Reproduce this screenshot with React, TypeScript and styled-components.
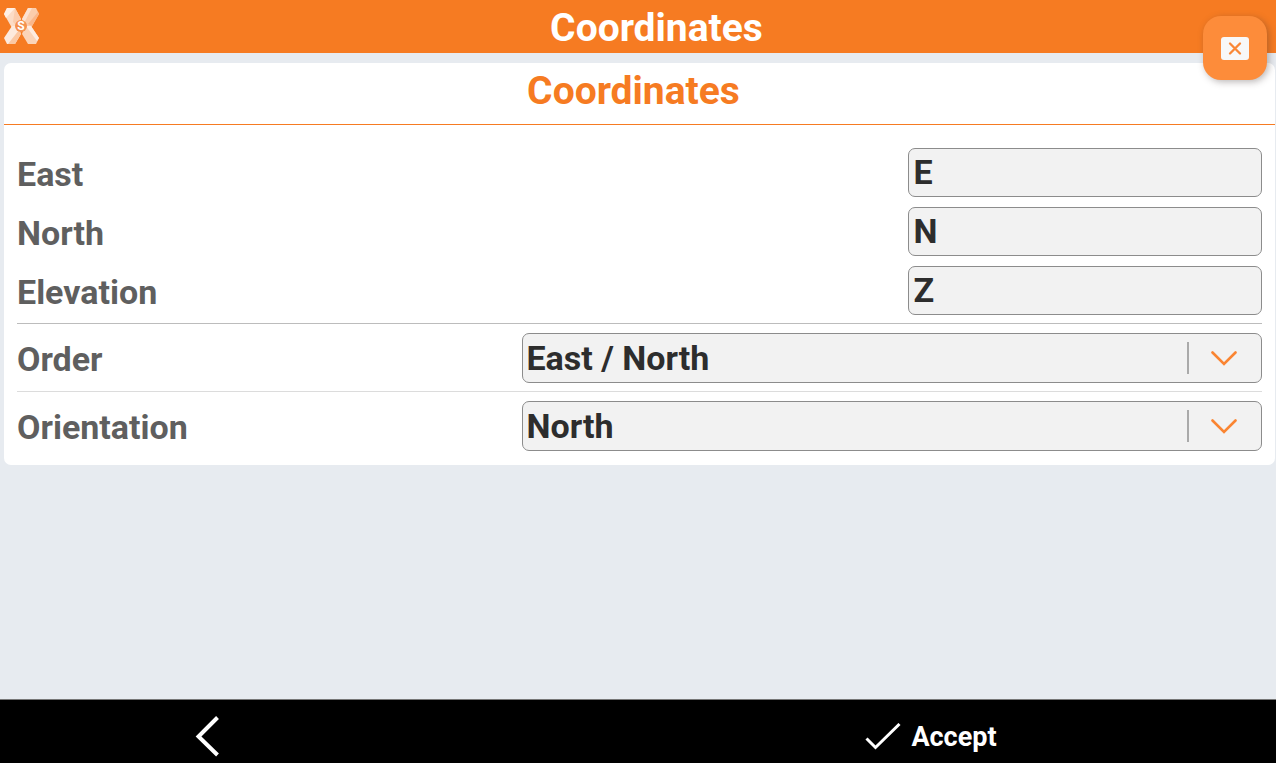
import React, { useId, useState } from "react";
import styled, { createGlobalStyle } from "styled-components";

const GlobalStyle = createGlobalStyle`
  *, *::before, *::after { box-sizing: border-box; }
  body {
    margin: 0;
    background: #e7ebf0;
    font-family: Roboto, "Liberation Sans", sans-serif;
    font-weight: 700;
  }
`;

const Page = styled.div`
  display: flex;
  flex-direction: column;
  min-height: 100vh;
`;

const Header = styled.header`
  display: flex;
  align-items: center;
  height: 53px;
  padding: 0 3px;
  background: #f67b22;
`;

const Logo = styled.svg`
  flex: none;
  width: 37px;
  height: 38px;
`;

const PageTitle = styled.h1`
  flex: 1;
  margin: 0;
  padding-top: 3px;
  color: #fff;
  font-size: 39px;
  font-weight: 700;
  line-height: 44px;
  text-align: center;
`;

const CloseButton = styled.button`
  position: absolute;
  top: 16px;
  right: 9px;
  display: flex;
  align-items: center;
  justify-content: center;
  width: 64px;
  height: 64px;
  padding: 0;
  border: 0;
  border-radius: 18px;
  background: #fd8c3a;
  box-shadow: 2px 2px 7px rgba(60, 50, 50, 0.35);
`;

const Card = styled.main`
  margin: 10px 1px 0 4px;
  border-radius: 7px;
  background: #fff;
`;

const CardTitle = styled.h2`
  margin: 0;
  padding: 6px 12px 11px 0;
  border-bottom: 1px solid #f67b22;
  color: #f67b22;
  font-size: 39px;
  font-weight: 700;
  line-height: 44px;
  text-align: center;
`;

const Form = styled.form`
  padding: 23px 13px 6px;
`;

const Group = styled.div<{ $line?: string }>`
  display: flex;
  flex-direction: column;
  gap: 10px;
  padding-bottom: 8px;
  border-bottom: ${(p) => (p.$line ? `1px solid ${p.$line}` : "0")};

  & + & {
    padding-top: 9px;
  }
`;

const Row = styled.div`
  display: flex;
  align-items: center;
  justify-content: space-between;
`;

const Label = styled.label`
  padding-top: 2px;
  color: #5f5f5f;
  font-size: 34px;
  line-height: 40px;
`;

const TextInput = styled.input`
  width: 28.4%;
  height: 49px;
  padding: 0 4px 2px;
  border: 1px solid #8c8c8c;
  border-radius: 7px;
  background: #f2f2f2;
  color: #2d2d2d;
  font: inherit;
  font-size: 34px;
  line-height: 40px;
`;

const SelectBox = styled.div`
  position: relative;
  width: 59.4%;
`;

const Select = styled.select`
  display: block;
  width: 100%;
  height: 50px;
  padding: 0 80px 1px 3px;
  appearance: none;
  border: 1px solid #8c8c8c;
  border-radius: 7px;
  background: #f2f2f2;
  color: #2d2d2d;
  font: inherit;
  font-size: 34px;
  line-height: 40px;
`;

const SelectMark = styled.span`
  position: absolute;
  inset: 8px 25px 8px auto;
  display: flex;
  align-items: center;
  gap: 22px;
  pointer-events: none;

  &::before {
    content: "";
    width: 2px;
    height: 32px;
    background: #aaa;
  }
`;

const Footer = styled.footer`
  display: grid;
  grid-template-columns: 414fr 310fr 414fr 138fr;
  height: 64px;
  margin-top: auto;
  border-top: 1px solid #777;
  background: #000;
`;

const FooterButton = styled.button<{ $column: number }>`
  grid-column: ${(p) => p.$column};
  display: flex;
  align-items: center;
  justify-content: center;
  gap: 10px;
  padding: 10px 0 0;
  border: 0;
  background: none;
  color: #fff;
  font: inherit;
  font-size: 27px;
  line-height: 32px;
`;

function BrandLogo() {
  return (
    <Logo viewBox="0 0 37 38" aria-hidden="true">
      <path d="M1 6 4 0h8l6 11-3 9H9Z" fill="#fcdcc6" />
      <path d="m12 0 6 11-3 8-5-5Z" fill="#fbcdae" />
      <path d="m1 6 3-6h8L3 10Z" fill="#fff0e6" />
      <path d="m36 6-3-6h-8l-6 11 3 9h6Z" fill="#fbcdac" />
      <path d="m19 11 6-11h4l-8 15Z" fill="#fde2d1" />
      <path d="M25 16 35 4l1 2-7 12Z" fill="#fab78a" />
      <path d="m1 30 8-12h6l3 8-6 10H4Z" fill="#fdeade" />
      <path d="m5 36 11-14 2 4-6 10Z" fill="#fbc8a4" />
      <path d="m36 30-8-12h-6l-3 8 6 10h8Z" fill="#fbd4b8" />
      <path d="m23 18h5l8 12-2 3Z" fill="#feece0" />
      <circle cx="18" cy="18" r="6" fill="#f5924f" />
      <text
        x="18"
        y="22"
        fill="#fff"
        fontFamily="Roboto, sans-serif"
        fontSize="12"
        fontWeight="700"
        textAnchor="middle"
      >
        S
      </text>
    </Logo>
  );
}

function TextField({ label, initial }: { label: string; initial: string }) {
  const id = useId();
  const [value, setValue] = useState(initial);
  return (
    <Row>
      <Label htmlFor={id}>{label}</Label>
      <TextInput id={id} value={value} onChange={(e) => setValue(e.target.value)} />
    </Row>
  );
}

function SelectField({ label, options }: { label: string; options: string[] }) {
  const id = useId();
  return (
    <Row>
      <Label htmlFor={id}>{label}</Label>
      <SelectBox>
        <Select id={id} defaultValue={options[0]}>
          {options.map((option) => (
            <option key={option}>{option}</option>
          ))}
        </Select>
        <SelectMark>
          <svg width="26" height="15" viewBox="0 0 26 15" fill="none" aria-hidden="true">
            <path d="M1.500 1.500 13 13 24.500 1.500" stroke="#fa8532" strokeWidth="2.600" strokeLinecap="round" />
          </svg>
        </SelectMark>
      </SelectBox>
    </Row>
  );
}

export default function App() {
  return (
    <Page>
      <GlobalStyle />
      <Header>
        <BrandLogo />
        <PageTitle>Coordinates</PageTitle>
        <CloseButton type="button" aria-label="Close">
          <svg width="28" height="23" viewBox="0 0 28 23" aria-hidden="true">
            <rect width="28" height="23" rx="3" fill="#f8f8f8" />
            <path
              d="m9 6.500 10 10m0-10-10 10"
              stroke="#fa8735"
              strokeWidth="2.300"
              strokeLinecap="round"
            />
          </svg>
        </CloseButton>
      </Header>
      <Card>
        <CardTitle>Coordinates</CardTitle>
        <Form>
          <Group $line="#bcbcbc">
            <TextField label="East" initial="E" />
            <TextField label="North" initial="N" />
            <TextField label="Elevation" initial="Z" />
          </Group>
          <Group $line="#dcdcdc">
            <SelectField label="Order" options={["East / North"]} />
          </Group>
          <Group>
            <SelectField label="Orientation" options={["North"]} />
          </Group>
        </Form>
      </Card>
      <Footer>
        <FooterButton type="button" $column={1} aria-label="Back">
          <svg width="24" height="42" viewBox="0 0 24 42" fill="none" aria-hidden="true">
            <path d="M22.500 1.500 3.500 20.500l19 18.500" stroke="#fff" strokeWidth="4" />
          </svg>
        </FooterButton>
        <FooterButton type="button" $column={3}>
          <svg width="36" height="28" viewBox="0 0 36 28" fill="none" aria-hidden="true">
            <path d="m1.500 15.500 9 9L34.500 1" stroke="#fff" strokeWidth="3" />
          </svg>
          Accept
        </FooterButton>
      </Footer>
    </Page>
  );
}
